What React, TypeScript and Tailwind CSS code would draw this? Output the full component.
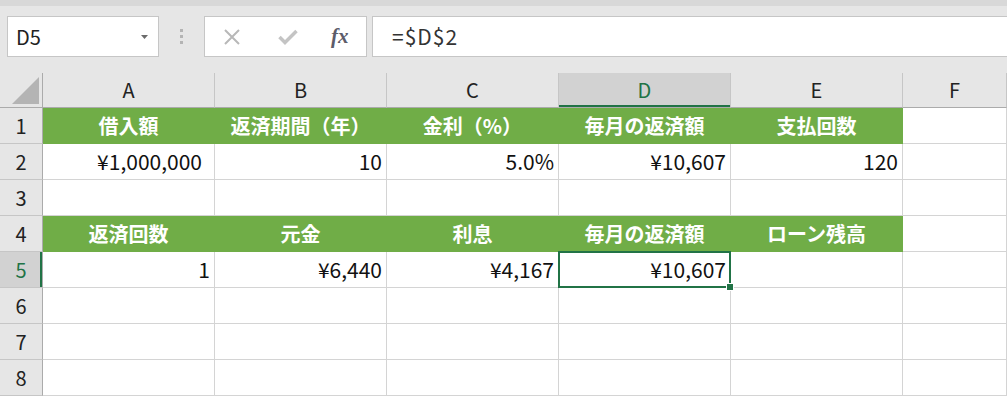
import React from 'react';

const font = "font-['Noto_Sans_CJK_JP','Noto_Sans',sans-serif]";

type Cell = { text?: string; head?: boolean; pr?: string };

const cols = ['A', 'B', 'C', 'D', 'E', 'F'];

const rows: Cell[][] = [
  [
    { text: '借入額', head: true },
    { text: '返済期間（年）', head: true },
    { text: '金利（%）', head: true },
    { text: '毎月の返済額', head: true },
    { text: '支払回数', head: true },
    {},
  ],
  [
    { text: '¥1,000,000', pr: 'pr-[12px]' },
    { text: '10' },
    { text: '5.0%' },
    { text: '¥10,607' },
    { text: '120' },
    {},
  ],
  [{}, {}, {}, {}, {}, {}],
  [
    { text: '返済回数', head: true },
    { text: '元金', head: true },
    { text: '利息', head: true },
    { text: '毎月の返済額', head: true },
    { text: 'ローン残高', head: true },
    {},
  ],
  [{ text: '1' }, { text: '¥6,440' }, { text: '¥4,167' }, { text: '¥10,607' }, {}, {}],
  [{}, {}, {}, {}, {}, {}],
  [{}, {}, {}, {}, {}, {}],
  [{}, {}, {}, {}, {}, {}],
];

const Toolbar: React.FC = () => (
  <div className="bg-[#e6e6e6]">
    <div className="h-[6px] bg-[#d8d8d8]" />
    <div className="h-[67px] flex pt-[10px] pl-[7px]">
      <div className="w-[152px] h-[41px] bg-white border border-[#c6c6c6] flex items-center justify-between pl-[8px] pr-[10px]">
        <span className="text-[20px] text-[#222] leading-none">D5</span>
        <svg width="7" height="4" viewBox="0 0 7 4">
          <polygon points="0,0 7,0 3.5,4" fill="#6b6b6b" />
        </svg>
      </div>
      <div className="w-[45px] flex flex-col items-center justify-center gap-[3px] h-[41px]">
        <span className="w-[3px] h-[3px] bg-[#b4b4b4]" />
        <span className="w-[3px] h-[3px] bg-[#b4b4b4]" />
        <span className="w-[3px] h-[3px] bg-[#b4b4b4]" />
      </div>
      <div className="w-[163px] h-[41px] bg-white border border-[#c6c6c6] flex items-center">
        <svg className="ml-[18px]" width="18" height="16" viewBox="0 0 18 16">
          <path d="M2 1 L16 15 M16 1 L2 15" stroke="#b8b8b8" strokeWidth="2" fill="none" />
        </svg>
        <svg className="ml-[37px]" width="20" height="16" viewBox="0 0 20 16">
          <path d="M1.5 8 L7 13.5 L18.5 2" stroke="#c4c4c4" strokeWidth="3.5" fill="none" />
        </svg>
        <span className="ml-[33px] font-['Liberation_Serif',serif] italic font-bold text-[21px] text-[#5c5c6a] leading-none">
          fx
        </span>
      </div>
      <div className="ml-[5px] flex-1 h-[41px] bg-white border border-[#c6c6c6] border-r-0 flex items-center pl-[19px]">
        <span className="text-[21px] tracking-[1px] text-[#333] leading-none">=$D$2</span>
      </div>
    </div>
  </div>
);

const App: React.FC = () => {
  return (
    <div className={`w-[1007px] h-[397px] overflow-hidden bg-white ${font}`}>
      <Toolbar />
      <div className="grid grid-cols-[43px_172px_172px_172px_172px_172px_1fr] bg-white">
        {/* column header row */}
        <div className="h-[35px] bg-[#e6e6e6] border-r border-b border-[#ababab] flex items-end justify-end pr-[3px] pb-[3px]">
          <svg width="27" height="27" viewBox="0 0 27 27">
            <polygon points="27,0 27,27 0,27" fill="#b4b4b4" />
          </svg>
        </div>
        {cols.map((c) => (
          <div
            key={c}
            className={
              c === 'D'
                ? 'h-[35px] bg-[#d2d2d2] border-r border-b border-r-[#c6c6c6] border-b-[#ababab] shadow-[inset_0_-2px_0_#217346] flex items-center justify-center text-[20px] text-[#217346]'
                : 'h-[35px] bg-[#e6e6e6] border-r border-b border-r-[#c6c6c6] border-b-[#ababab] flex items-center justify-center text-[20px] text-[#222]'
            }
          >
            {c}
          </div>
        ))}

        {rows.map((row, ri) => (
          <React.Fragment key={ri}>
            <div
              className={
                ri === 4
                  ? 'h-[36px] bg-[#d2d2d2] border-r border-b border-r-[#ababab] border-b-[#c6c6c6] shadow-[inset_-2px_0_0_#217346] flex items-center justify-center text-[20px] text-[#217346]'
                  : 'h-[36px] bg-[#e6e6e6] border-r border-b border-r-[#ababab] border-b-[#c6c6c6] flex items-center justify-center text-[20px] text-[#222]'
              }
            >
              {ri + 1}
            </div>
            {row.map((cell, ci) => {
              const isHeadRow = ri === 0 || ri === 3;
              const green = isHeadRow && ci < 5;
              const selected = ri === 4 && ci === 3;
              return (
                <div
                  key={ci}
                  className={
                    green
                      ? 'h-[36px] bg-[#70ad47] border-r border-b border-[#70ad47] flex items-center justify-center text-[20px] font-bold text-white'
                      : `${selected ? 'relative z-10' : ''} h-[36px] border-r border-b border-[#d4d4d4] flex items-center justify-end text-[21px] text-[#111] ${cell.pr ?? 'pr-[4px]'}`
                  }
                >
                  {cell.text}
                  {selected && (
                    <>
                      <div className="absolute -left-[1px] -top-[1px] -right-[1px] -bottom-[1px] border-2 border-[#217346]" />
                      <div className="absolute -right-[4px] -bottom-[4px] w-[8px] h-[8px] bg-[#217346] border border-white" />
                    </>
                  )}
                </div>
              );
            })}
          </React.Fragment>
        ))}
      </div>
    </div>
  );
};

export default App;
